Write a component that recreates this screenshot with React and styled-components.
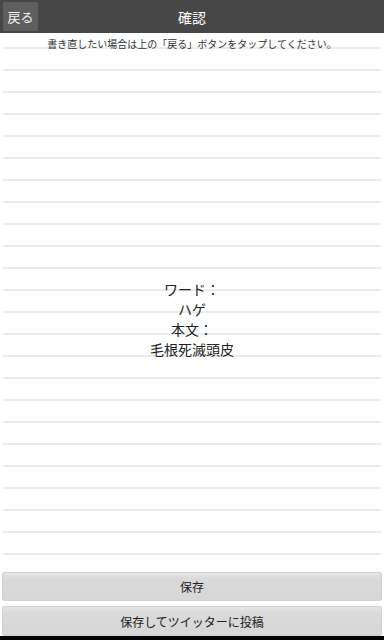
import React from 'react';
import styled, { createGlobalStyle } from 'styled-components';

const GlobalStyle = createGlobalStyle`
  html, body {
    margin: 0;
    padding: 0;
    background: #ffffff;
  }
  * {
    box-sizing: border-box;
  }
`;

const Page = styled.div`
  width: 384px;
  height: 640px;
  display: flex;
  flex-direction: column;
  overflow: hidden;
  font-family: "Noto Sans CJK JP", "Noto Sans", sans-serif;
  color: #222;
  background: #fff;
`;

const Header = styled.header`
  height: 33px;
  flex-shrink: 0;
  background: #474747;
  display: grid;
  grid-template-columns: 44px 1fr 44px;
  align-items: center;
  padding: 2px 3px 2px;
`;

const BackButton = styled.button`
  height: 29px;
  width: 35px;
  border: none;
  border-radius: 1px;
  background: #5e5e5e;
  color: #f4f4f4;
  font-family: inherit;
  font-size: 13px;
  padding: 0;
  cursor: pointer;
`;

const Title = styled.h1`
  margin: 0;
  text-align: center;
  color: #ffffff;
  font-size: 14px;
  font-weight: 400;
`;

// ruled-paper look: a soft 2px line every 22px
const Body = styled.main`
  flex: 1;
  display: flex;
  flex-direction: column;
  background-color: #fff;
  background-image: repeating-linear-gradient(
    to bottom,
    transparent 0,
    transparent 14px,
    #f0f0f0 14px,
    #e8e8e8 15px,
    #f0f0f0 16px,
    transparent 16px,
    transparent 22px
  );
  background-size: calc(100% - 6px) 100%;
  background-position: 3px 0;
  background-repeat: no-repeat;
`;

const Notice = styled.p`
  margin: 0;
  padding-top: 4px;
  height: 18px;
  line-height: 14px;
  font-size: 10px;
  text-align: center;
  color: #333;
`;

const Message = styled.div`
  flex: 1;
  display: flex;
  flex-direction: column;
  align-items: center;
  justify-content: center;
  padding-top: 17px;
`;

const Line = styled.div`
  font-size: 14px;
  line-height: 20px;
  color: #222;
`;

const Footer = styled.footer`
  flex-shrink: 0;
  display: flex;
  flex-direction: column;
  gap: 5px;
  padding: 2px 2px 0;
  background: #fff;
`;

const ActionButton = styled.button`
  height: ${p => p.$h}px;
  width: 100%;
  border: 1px solid #d2d2d2;
  border-radius: 2px;
  background: linear-gradient(to bottom, #e6e6e6 0, #dadada 20%, #d6d6d6 100%);
  color: #222;
  font-family: inherit;
  font-size: 12px;
  padding: 0;
  cursor: pointer;
`;

const BottomBar = styled.div`
  height: 4px;
  flex-shrink: 0;
  background: #000;
`;

export default function App() {
  return (
    <>
      <GlobalStyle />
      <Page>
        <Header>
          <BackButton>戻る</BackButton>
          <Title>確認</Title>
          <span />
        </Header>
        <Body>
          <Notice>書き直したい場合は上の「戻る」ボタンをタップしてください。</Notice>
          <Message>
            <Line>ワード：</Line>
            <Line>ハゲ</Line>
            <Line>本文：</Line>
            <Line>毛根死滅頭皮</Line>
          </Message>
        </Body>
        <Footer>
          <ActionButton $h={29}>保存</ActionButton>
          <ActionButton $h={30}>保存してツイッターに投稿</ActionButton>
        </Footer>
        <BottomBar />
      </Page>
    </>
  );
}
